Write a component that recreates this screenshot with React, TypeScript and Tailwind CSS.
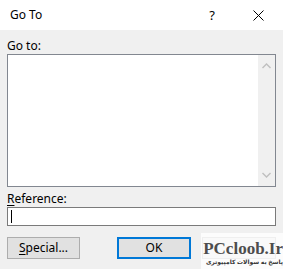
export default function App() {
  const ui = { fontFamily: '"Segoe UI", "Noto Sans", "Open Sans", sans-serif' };
  return (
    <div className="w-[283px] h-[269px] bg-[#f0f0f0] text-[12px] text-black overflow-hidden relative" style={ui}>
      {/* Title bar */}
      <div className="h-[30px] bg-white flex items-center">
        <span className="ml-[10px] text-[12px] leading-none">Go To</span>
        <span className="ml-auto mr-[38px] text-[13px] leading-none">?</span>
        <svg width="11" height="11" viewBox="0 0 11 11" className="mr-[19px]">
          <path d="M0.5 0.5L10.5 10.5M10.5 0.5L0.5 10.5" stroke="#000" strokeWidth="1" fill="none" />
        </svg>
      </div>

      <div className="px-[7px]">
        <div className="pt-[9px] h-[24px] leading-[14px]">Go to:</div>

        {/* List box */}
        <div className="h-[133px] border border-[#828790] bg-white flex">
          <div className="flex-1" />
          <div className="w-[17px] bg-[#f0f0f0] flex flex-col items-center justify-between py-[8px]">
            <svg width="9" height="6" viewBox="0 0 9 6">
              <path d="M0.5 5L4.5 1L8.5 5" stroke="#bfbfbf" strokeWidth="1.4" fill="none" />
            </svg>
            <svg width="9" height="6" viewBox="0 0 9 6">
              <path d="M0.5 1L4.5 5L8.5 1" stroke="#bfbfbf" strokeWidth="1.4" fill="none" />
            </svg>
          </div>
        </div>

        <div className="pt-[5px] h-[20px] leading-[14px]">
          <span className="underline underline-offset-2">R</span>eference:
        </div>

        {/* Input */}
        <div className="h-[19px] border border-[#7a7a7a] bg-white flex items-center">
          <div className="ml-[3px] w-px h-[13px] bg-black" />
        </div>

        {/* Buttons */}
        <div className="mt-[11px] flex">
          <div className="w-[73px] h-[22px] border border-[#adadad] bg-[#e1e1e1] flex items-center justify-center">
            <span>
              <span className="underline underline-offset-2">S</span>pecial...
            </span>
          </div>
          <div className="ml-[37px] w-[74px] h-[22px] border-2 border-[#0078d7] bg-[#e1e1e1] flex items-center justify-center">
            OK
          </div>
          {/* Cancel button, hidden under the watermark */}
          <div className="ml-[11px] w-[74px] h-[22px] border border-[#adadad] bg-[#e1e1e1]" />
        </div>
      </div>

      {/* Watermark overlay */}
      <div className="absolute left-[201px] top-[233px] w-[82px] h-[36px] bg-white/80 flex flex-col items-end pt-[8px]">
        <span
          className="text-[17px] leading-[16px] font-bold text-[#4d4d4d] whitespace-nowrap"
          style={{ fontFamily: '"Liberation Serif", "DejaVu Serif", serif' }}
        >
          PCcloob.Ir
        </span>
        <span
          dir="rtl"
          className="text-[6px] leading-[10px] font-bold text-[#333] whitespace-nowrap"
          style={{ fontFamily: '"Noto Sans", "DejaVu Sans", sans-serif' }}
        >
          پاسخ به سوالات کامپیوتری
        </span>
      </div>
    </div>
  );
}
